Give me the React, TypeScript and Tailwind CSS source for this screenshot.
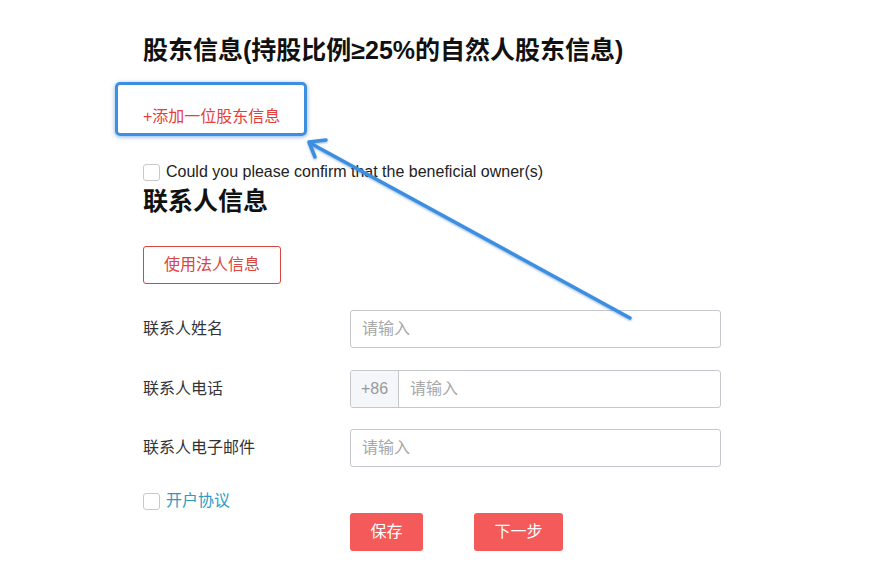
import React from "react";

const font = { fontFamily: '"Liberation Sans", "Noto Sans CJK SC", sans-serif' };

const Checkbox = () => (
  <span className="inline-block w-[17px] h-[17px] border border-[#c9c9c9] rounded-[3px] bg-white shrink-0" />
);

const FormRow: React.FC<{ label: string; prefix?: string }> = ({ label, prefix }) => (
  <div className="flex items-center h-[38px]">
    <div className="w-[207px] text-[16px] text-[#333]">{label}</div>
    <div className="flex w-[371px] h-[38px] border border-[#c4c7cc] rounded-[3px] overflow-hidden">
      {prefix && (
        <div className="w-[48px] flex items-center justify-center bg-[#f4f6fa] border-r border-[#c4c7cc] text-[16px] text-[#999]">
          {prefix}
        </div>
      )}
      <div className="flex-1 flex items-center px-[11px] text-[16px] text-[#a8a8a8]">请输入</div>
    </div>
  </div>
);

export default function App() {
  return (
    <div className="relative w-[891px] h-[575px] bg-white overflow-hidden" style={font}>
      <div className="pl-[143px] pt-[34px]">
        <h2 className="text-[25px] leading-[32px] font-bold text-[#111]">
          股东信息(持股比例≥25%的自然人股东信息)
        </h2>

        {/* highlighted annotation box */}
        <div className="mt-[16px] -ml-[28px] w-[192px] h-[54px] border-[3px] border-[#3d8fe0] rounded-[5px] shadow-[0_1px_4px_rgba(40,110,200,0.55)] pl-[25px] pt-[20px]">
          <span className="text-[16px] leading-[20px] text-[#e4403b]">+添加一位股东信息</span>
        </div>

        <div className="mt-[26px] flex items-center gap-[6px] h-[20px]">
          <Checkbox />
          <span className="text-[16px] text-[#222]">Could you please confirm that the beneficial owner(s)</span>
        </div>

        <h2 className="mt-[5px] text-[25px] leading-[28px] font-bold text-[#111]">联系人信息</h2>

        <button className="mt-[31px] w-[138px] h-[38px] border border-[#d9463f] rounded-[3px] text-[16px] text-[#d9463f] bg-white">
          使用法人信息
        </button>

        <div className="mt-[26px] flex flex-col gap-[21.5px]">
          <FormRow label="联系人姓名" />
          <FormRow label="联系人电话" prefix="+86" />
          <FormRow label="联系人电子邮件" />
        </div>

        <div className="mt-[24px] flex items-center gap-[6px] h-[20px]">
          <Checkbox />
          <span className="text-[16px] text-[#2e9cc2]">开户协议</span>
        </div>

        <div className="mt-[2px] ml-[207px] flex gap-[51px]">
          <button className="w-[73px] h-[38px] rounded-[3px] bg-[#f55a5a] text-white text-[16px]">保存</button>
          <button className="w-[89px] h-[38px] rounded-[3px] bg-[#f55a5a] text-white text-[16px]">下一步</button>
        </div>
      </div>

      {/* annotation arrow */}
      <svg className="absolute inset-0 pointer-events-none" width="891" height="575">
        <defs>
          <filter id="sh" x="-10%" y="-10%" width="120%" height="120%">
            <feDropShadow dx="0" dy="1" stdDeviation="1.2" floodColor="#1f5fa8" floodOpacity="0.45" />
          </filter>
        </defs>
        <g filter="url(#sh)" stroke="#3b8ee0" strokeWidth="3.5" strokeLinecap="round" fill="none">
          <line x1="630" y1="318" x2="310" y2="143" />
          <polyline points="326,140 309,142 315,157" strokeLinejoin="round" />
        </g>
      </svg>
    </div>
  );
}
